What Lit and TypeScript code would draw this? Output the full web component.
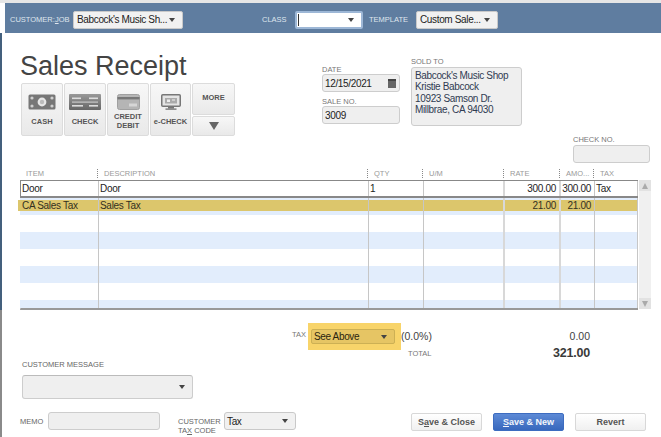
import { LitElement, html, css, svg } from "lit";
import { customElement } from "lit/decorators.js";

const COLS = [
  { w: 78, l: "ITEM" },
  { w: 270, l: "DESCRIPTION" },
  { w: 55, l: "QTY" },
  { w: 81, l: "U/M", thick: true },
  { w: 56, l: "RATE", thick: true },
  { w: 34, l: "AMO..." },
  { w: 43, l: "TAX" },
];

const cashIcon = svg`<svg class="ic" width="28" height="16" viewBox="0 0 28 16"><rect x="0.5" y="0.5" width="27" height="15" rx="1.5" fill="#777"/><circle cx="14" cy="8" r="4.4" fill="#e6e6e6"/><circle cx="14" cy="8" r="2.2" fill="#bbb"/><circle cx="4" cy="4" r="1.6" fill="#d0d0d0"/><circle cx="24" cy="4" r="1.6" fill="#d0d0d0"/><circle cx="4" cy="12" r="1.6" fill="#d0d0d0"/><circle cx="24" cy="12" r="1.6" fill="#d0d0d0"/></svg>`;
const checkIcon = svg`<svg class="ic" width="32" height="16" viewBox="0 0 32 16"><defs><linearGradient id="cg" x1="0" y1="0" x2="0" y2="1"><stop offset="0" stop-color="#999"/><stop offset="1" stop-color="#666"/></linearGradient></defs><rect width="32" height="16" rx="1" fill="url(#cg)"/><rect x="3" y="3.5" width="9" height="1.6" fill="#ddd"/><rect x="20" y="3.5" width="9" height="1.6" fill="#ddd"/><rect x="3" y="7.5" width="26" height="1.2" fill="#c8c8c8"/><rect x="3" y="11" width="11" height="1.6" fill="#ddd"/><rect x="20" y="11" width="9" height="1.6" fill="#ddd"/></svg>`;
const cardIcon = svg`<svg class="ic" width="23" height="16" viewBox="0 0 23 16"><rect x="0.5" y="0.5" width="22" height="15" rx="2" fill="#b5b5b5" stroke="#a0a0a0"/><rect x="0.5" y="3" width="22" height="2.4" fill="#777"/><rect x="12" y="9.5" width="8" height="3" fill="#d6d6d6"/></svg>`;
const monitorIcon = svg`<svg class="ic" width="20" height="16" viewBox="0 0 20 16"><rect x="0.75" y="0.75" width="18.5" height="11.5" rx="1" fill="#e4e4e4" stroke="#777" stroke-width="1.5"/><rect x="4" y="4" width="12" height="5.5" fill="#aaa"/><rect x="6" y="5.5" width="3" height="2.5" fill="#eee"/><rect x="11" y="5.5" width="3" height="1" fill="#eee"/><rect x="7" y="13" width="6" height="1.5" fill="#777"/><rect x="4.5" y="14.5" width="11" height="1.2" fill="#666"/></svg>`;

@customElement("app-root")
export class AppRoot extends LitElement {
  static styles = css`
    :host { display: block; width: 661px; height: 437px; overflow: hidden; background: #fff; position: relative;
      font-family: "Liberation Sans", Arial, sans-serif; color: #333; }
    u { text-decoration-thickness: 1px; }

    .page { display: flex; flex-direction: column; height: 437px; border-top: 3px solid #e6e6e6; box-sizing: border-box; }

    .topbar { height: 30px; margin-left: 5px; padding-top: 3px; box-sizing: border-box; background: #5f7da0; display: flex; align-items: center; color: #dfe6ee; font-size: 7.5px; flex: none; }
    .topbar .lbl-job { margin-left: 5px; width: 63px; white-space: nowrap; }
    .topbar .lbl-class { margin-left: 79px; width: 33px; }
    .topbar .lbl-tpl { margin-left: 6px; width: 47px; }

    .combo { box-sizing: border-box; display: flex; align-items: center; justify-content: space-between; height: 18px; padding: 0 7px 0 3px;
      background: #f1f1f1; border: 1px solid #c9c9c9; border-radius: 2px; font-size: 10px; letter-spacing: -0.35px; color: #222; white-space: nowrap; }
    .caret { width: 0; height: 0; border-left: 3.5px solid transparent; border-right: 3.5px solid transparent; border-top: 4px solid #444; flex: none; }
    .c-job { width: 110px; }
    .c-class { width: 68px; background: #fff; border: 2px solid #9db7d6; padding-left: 1px; }
    .cursor { width: 1px; height: 12px; background: #333; }
    .c-tpl { width: 82px; }

    .main { flex: 1; display: flex; flex-direction: column; min-height: 0; }
    .band { border-left: 2px solid #44607d; }

    .head { height: 130px; display: flex; flex: none; box-sizing: border-box; }
    .left { margin-left: 18px; width: 300px; padding-top: 19px; box-sizing: border-box; }
    h1 { margin: 0; font-weight: 400; font-size: 27px; line-height: 28px; color: #444; }
    .types { display: flex; gap: 1px; margin-top: 3px; margin-left: 1px; }
    .type { box-sizing: border-box; width: 42px; height: 53px; border: 1px solid #dcdcdc; border-radius: 2px; background: linear-gradient(#f7f7f7, #e9e9e9);
      display: flex; flex-direction: column; align-items: center; font-size: 7.5px; font-weight: 700; color: #555; text-align: center; line-height: 9px; }
    .type .iw { height: 17px; margin-top: 9px; display: flex; align-items: center; }
    .type .tl { flex: 1; display: flex; align-items: center; padding-bottom: 3px; }
    .type.w41 { width: 41px; }
    .more { display: flex; flex-direction: column; gap: 1px; width: 43px; }
    .more div { box-sizing: border-box; border: 1px solid #dcdcdc; border-radius: 2px; background: linear-gradient(#f7f7f7, #e9e9e9); display: flex; align-items: center; justify-content: center; }
    .more .m1 { height: 32px; font-size: 7.5px; font-weight: 700; color: #555; padding-bottom: 4px; }
    .more .m2 { height: 20px; }
    .tri { width: 0; height: 0; border-left: 5.5px solid transparent; border-right: 5.5px solid transparent; border-top: 8px solid #666; }

    .lbl { font-size: 7.5px; color: #777; line-height: 9px; white-space: nowrap; }
    .field { box-sizing: border-box; background: #efefef; border: 1px solid #cdcdcd; border-radius: 3px; height: 18px; font-size: 10px; letter-spacing: -0.35px; color: #222;
      display: flex; align-items: center; padding: 0 2px; justify-content: space-between; }
    .datecol { margin-left: 2px; width: 78px; padding-top: 32px; box-sizing: border-box; }
    .datecol .lbl2 { margin-top: 5px; }
    .cal { width: 8px; height: 9px; background: #666; box-shadow: inset 0 2px 0 #444; margin-right: 1px; }
    .soldcol { margin-left: 11px; width: 111px; padding-top: 24px; box-sizing: border-box; }
    .soldcol .lbl { margin-bottom: 1px; }
    .sold { height: 59px; display: block; line-height: 11.4px; padding: 2px 3px; color: #2f3b52; }
    .checkcol { margin-left: 51px; width: 77px; align-self: flex-end; }
    .checkcol .field { margin-top: 1px; }

    .thead { display: flex; height: 17px; margin-left: 18px; flex: none; align-items: center; padding-top: 3px; box-sizing: border-box; }
    .th { box-sizing: border-box; font-size: 7.5px; color: #999; padding-left: 6px; line-height: 9px; position: relative; }
    .th.sep::before { content: ""; position: absolute; left: -1px; top: 0; height: 9px; border-left: 1px dotted #888; }

    .tablewrap { display: flex; margin-left: 18px; height: 130px; flex: none; }
    .tbody { width: 618px; height: 130px; box-sizing: border-box; border-bottom: 2px solid #999; border-left: 1px solid #c6c6c6; position: relative; }
    .rowsclip { height: 128px; overflow: hidden; margin-left: -3px; padding-left: 2px; }
    .row { display: flex; height: 17px; width: 618px; box-sizing: border-box; padding-left: 1px; font-size: 10px; letter-spacing: -0.3px; color: #222; }
    .row.blue { background: #e2edfc; }
    .row.white { background: #fff; }
    .cell { flex: none; box-sizing: border-box; border-right: 1px solid #c6c6c6; padding: 0 3px 0 1px; white-space: nowrap; overflow: hidden; }
    .cell.thick { border-right: 2px solid #d8d8d8; }
    .cell.r { text-align: right; }
    .row.first { height: 18px; border: 1px solid #888; border-bottom-width: 2px; padding-left: 0; background: #fff; line-height: 15px; }
    .row.goldwrap { position: relative; background: #e2edfc; }
    .gold { position: absolute; left: -2px; top: 2px; height: 11px; width: 620px; background: #dcc66c; }
    .row.goldwrap .cell { position: relative; height: 17px; padding-top: 2px; line-height: 11px; color: #33301f; }

    .scroll { width: 12px; height: 129px; margin-left: 1px; background: #f0f0f0; display: flex; flex-direction: column; justify-content: space-between; align-items: center; }
    .sb { width: 12px; height: 11px; background: #e2e2e2; display: flex; align-items: center; justify-content: center; }
    .up { width: 0; height: 0; border-left: 3.5px solid transparent; border-right: 3.5px solid transparent; border-bottom: 6px solid #aaa; }
    .dn { width: 0; height: 0; border-left: 3.5px solid transparent; border-right: 3.5px solid transparent; border-top: 6px solid #aaa; }

    .bottom { flex: 1; border-left: 2px solid #8a8a8a; display: flex; flex-direction: column; }
    .totals { display: flex; padding-top: 13px; height: 37px; flex: none; }
    .taxlbl { margin-left: 290px; width: 16px; padding-top: 7px; }
    .hi { width: 93px; height: 27px; background: #f8d46a; padding: 6px 6px 0 3px; box-sizing: border-box; flex: none; }
    .c-see { height: 15px; width: 84px; background: #e6c564; border: 1px solid #cdb054; padding: 0 7px 0 2px; color: #2a2410; }
    .sums { width: 189px; padding-top: 6px; box-sizing: border-box; font-size: 10.5px; color: #444; }
    .sum { display: flex; justify-content: space-between; align-items: center; height: 14px; }
    .sum + .sum { margin-top: 3px; }
    .sum .tl2 { padding-left: 7px; font-size: 7.5px; color: #777; }
    .big { font-size: 12.5px; font-weight: 700; letter-spacing: -0.2px; color: #3a3a3a; }

    .msg { margin-left: 20px; height: 52px; flex: none; }
    .msg .lbl { color: #666; }
    .msgbox { margin-top: 6px; width: 171px; height: 24px; padding-right: 7px; box-sizing: border-box; justify-content: flex-end; border-top-color: #bbb; }

    .foot { display: flex; align-items: flex-start; margin-left: 18px; }
    .memolbl { width: 28px; padding-top: 5px; color: #666; }
    .memo { width: 112px; height: 18px; }
    .ctc { margin-left: 18px; width: 46px; line-height: 9px; padding-top: 5px; color: #666; }
    .c-tax { width: 72px; padding: 0 7px 0 2px; border-radius: 3px; }
    .btns { display: flex; gap: 11px; margin-left: 115px; margin-top: 1px; }
    .btn { box-sizing: border-box; width: 71px; height: 18px; border: 1px solid #d8d8d8; border-radius: 2px; background: linear-gradient(#fff, #f0f0f0); font-size: 9px; font-weight: 700; color: #555;
      display: flex; align-items: center; justify-content: center; white-space: nowrap; }
    .btn.pri { background: linear-gradient(#5d8ad6, #3868bd); border-color: #3d6cc0; color: #f2f5fb; }
  `;

  private colCells(vals: string[]) {
    return COLS.map((c, i) => {
      const right = i === 4 || i === 5;
      return html`<div class="cell ${c.thick ? "thick" : ""} ${right ? "r" : ""}" style="width:${c.w}px">${vals[i] ?? ""}</div>`;
    });
  }

  render() {
    const stripes = ["white", "blue", "white", "blue", "white", "blue"];
    return html`
      <div class="page">
        <div class="topbar">
          <span class="lbl-job">CUSTOMER:<u>J</u>OB</span>
          <div class="combo c-job"><span>Babcock's Music Sh...</span><span class="caret"></span></div>
          <span class="lbl-class">CLASS</span>
          <div class="combo c-class"><span class="cursor"></span><span class="caret"></span></div>
          <span class="lbl-tpl">TEMPLATE</span>
          <div class="combo c-tpl"><span>Custom Sale...</span><span class="caret"></span></div>
        </div>

        <div class="main">
          <div class="band">
            <div class="head">
              <div class="left">
                <h1>Sales Receipt</h1>
                <div class="types">
                  <div class="type"><div class="iw">${cashIcon}</div><div class="tl">CASH</div></div>
                  <div class="type"><div class="iw">${checkIcon}</div><div class="tl">CHECK</div></div>
                  <div class="type"><div class="iw">${cardIcon}</div><div class="tl">CREDIT<br />DEBIT</div></div>
                  <div class="type w41"><div class="iw">${monitorIcon}</div><div class="tl">e-CHECK</div></div>
                  <div class="more"><div class="m1">MORE</div><div class="m2"><span class="tri"></span></div></div>
                </div>
              </div>
              <div class="datecol">
                <div class="lbl">DATE</div>
                <div class="field"><span>12/15/2021</span><span class="cal"></span></div>
                <div class="lbl lbl2">SALE NO.</div>
                <div class="field"><span>3009</span></div>
              </div>
              <div class="soldcol">
                <div class="lbl">SOLD TO</div>
                <div class="field sold">Babcock's Music Shop<br />Kristie Babcock<br />10923 Samson Dr.<br />Millbrae, CA 94030</div>
              </div>
              <div class="checkcol">
                <div class="lbl">CHECK NO.</div>
                <div class="field"></div>
              </div>
            </div>

            <div class="thead">
              ${COLS.map((c, i) => html`<div class="th ${i ? "sep" : ""}" style="width:${c.w}px">${c.l}</div>`)}
            </div>

            <div class="tablewrap">
              <div class="tbody">
                <div class="rowsclip">
                  <div class="row first">${this.colCells(["Door", "Door", "1", "", "300.00", "300.00", "Tax"])}</div>
                  <div class="row goldwrap"><div class="gold"></div>${this.colCells(["CA Sales Tax", "Sales Tax", "", "", "21.00", "21.00", ""])}</div>
                  ${stripes.map((s) => html`<div class="row ${s}">${this.colCells([])}</div>`)}
                </div>
              </div>
              <div class="scroll">
                <div class="sb"><span class="up"></span></div>
                <div class="sb"><span class="dn"></span></div>
              </div>
            </div>
          </div>

          <div class="bottom">
            <div class="totals">
              <span class="lbl taxlbl">TAX</span>
              <div class="hi"><div class="combo c-see"><span>See Above</span><span class="caret"></span></div></div>
              <div class="sums">
                <div class="sum"><span>(0.0%)</span><span>0.00</span></div>
                <div class="sum"><span class="tl2">TOTAL</span><span class="big">321.00</span></div>
              </div>
            </div>
            <div class="msg">
              <div class="lbl">CUSTOMER MESSAGE</div>
              <div class="field msgbox"><span class="caret"></span></div>
            </div>
            <div class="foot">
              <span class="lbl memolbl">MEMO</span>
              <div class="field memo"></div>
              <span class="lbl ctc">CUSTOMER<br />TA<u>X</u> CODE</span>
              <div class="combo c-tax"><span>Tax</span><span class="caret"></span></div>
              <div class="btns">
                <div class="btn">S<u>a</u>ve &amp; Close</div>
                <div class="btn pri"><u>S</u>ave &amp; New</div>
                <div class="btn">Revert</div>
              </div>
            </div>
          </div>
        </div>
      </div>
    `;
  }
}
